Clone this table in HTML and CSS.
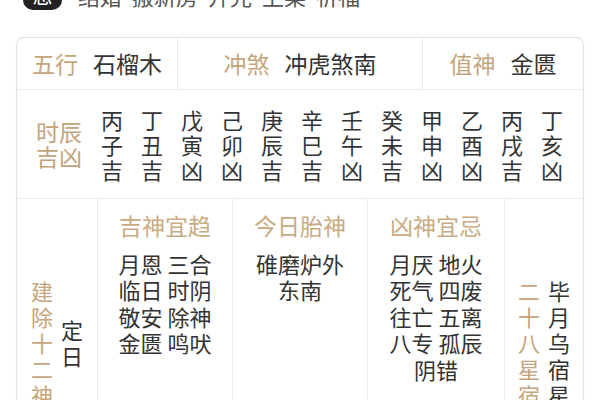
FILE: index.html
```html
<!DOCTYPE html>
<html lang="zh">
<head>
<meta charset="utf-8">
<title>黄历</title>
<link rel="stylesheet" href="styles.css">
</head>
<body>
<div class="top-row">
  <span class="badge">忌</span>
  <span class="top-items">
    <span>结婚</span><span>搬新房</span><span>开光</span><span>上梁</span><span>祈福</span>
  </span>
</div>
<div class="card">
  <div class="row r1">
    <div class="cell"><span class="lbl">五行</span><span class="val">石榴木</span></div>
    <div class="cell"><span class="lbl">冲煞</span><span class="val">冲虎煞南</span></div>
    <div class="cell"><span class="lbl">值神</span><span class="val">金匮</span></div>
  </div>
  <div class="row r2">
    <div class="hour-label">时辰<br>吉凶</div>
    <div class="hours">
      <div class="hour">丙<br>子<br>吉</div>
      <div class="hour">丁<br>丑<br>吉</div>
      <div class="hour">戊<br>寅<br>凶</div>
      <div class="hour">己<br>卯<br>凶</div>
      <div class="hour">庚<br>辰<br>吉</div>
      <div class="hour">辛<br>巳<br>吉</div>
      <div class="hour">壬<br>午<br>凶</div>
      <div class="hour">癸<br>未<br>吉</div>
      <div class="hour">甲<br>申<br>凶</div>
      <div class="hour">乙<br>酉<br>凶</div>
      <div class="hour">丙<br>戌<br>吉</div>
      <div class="hour">丁<br>亥<br>凶</div>
    </div>
  </div>
  <div class="row r3">
    <div class="vcol">
      <div class="vlbl">建除十二神</div>
      <div class="vval">定日</div>
    </div>
    <div class="gods">
      <div class="ghead">吉神宜趋</div>
      <div class="glist">
        <div>月恩 三合</div>
        <div>临日 时阴</div>
        <div>敬安 除神</div>
        <div>金匮 鸣吠</div>
      </div>
    </div>
    <div class="gods">
      <div class="ghead">今日胎神</div>
      <div class="glist">
        <div>碓磨炉外</div>
        <div>东南</div>
      </div>
    </div>
    <div class="gods">
      <div class="ghead">凶神宜忌</div>
      <div class="glist">
        <div>月厌 地火</div>
        <div>死气 四废</div>
        <div>往亡 五离</div>
        <div>八专 孤辰</div>
        <div>阴错</div>
      </div>
    </div>
    <div class="vcol">
      <div class="vlbl">二十八星宿</div>
      <div class="vval">毕月乌宿星</div>
    </div>
  </div>
</div>
</body>
</html>
```

FILE: styles.css
```css
* { box-sizing: border-box; }

html, body {
  margin: 0;
  padding: 0;
  background: #ffffff;
  overflow: hidden;
}

body {
  width: 600px;
  height: 400px;
  font-family: "Noto Sans CJK SC", "Noto Sans", sans-serif;
  color: #333333;
}

.top-row {
  display: flex;
  align-items: flex-end;
  height: 26px;
  margin-top: -18px;
  padding-left: 23px;
}

.badge {
  width: 39px;
  height: 28px;
  border-radius: 10px;
  background: #222222;
  color: #ffffff;
  font-size: 20px;
  line-height: 28px;
  text-align: center;
  margin-bottom: -2px;
}

.top-items {
  display: flex;
  gap: 10px;
  margin-left: 16px;
  font-size: 22px;
  line-height: 26px;
  color: #555555;
}

.card {
  margin: 29px 0 0 16px;
  width: 568px;
  border: 1px solid #e2e2e2;
  border-radius: 8px;
  box-shadow: 0 0 3px rgba(0, 0, 0, 0.04);
  background: #ffffff;
}

.row {
  border-bottom: 1px solid #ebebeb;
}

.r1 {
  display: grid;
  grid-template-columns: 160px 245px 1fr;
}

.r1 .cell {
  display: flex;
  justify-content: center;
  align-items: center;
  padding: 11.5px 0;
  font-size: 23px;
  line-height: 27.6px;
}

.r1 .cell + .cell {
  border-left: 1px solid #ebebeb;
}

.lbl {
  color: #c5a57b;
}

.val {
  margin-left: 15px;
  color: #333333;
}

.r2 {
  display: flex;
  align-items: center;
  padding: 17px 0 16px;
}

.hour-label {
  width: 84px;
  text-align: center;
  color: #c3a37c;
  font-size: 23px;
  line-height: 25px;
}

.hours {
  display: grid;
  grid-template-columns: repeat(12, 22px);
  column-gap: 18px;
}

.hour {
  font-size: 22px;
  line-height: 25px;
  text-align: center;
  color: #333333;
}

.r3 {
  display: grid;
  grid-template-columns: 80px 135px 135px 137px 1fr;
  height: 287px;
  border-bottom: none;
}

.r3 > div + div {
  border-left: 1px solid #ebebeb;
}

.vcol {
  display: flex;
  justify-content: center;
  align-items: center;
  gap: 8px;
  font-size: 22px;
  line-height: 26px;
}

.vlbl, .vval {
  width: 22px;
  text-align: center;
  word-break: break-all;
}

.vlbl {
  color: #c5a57b;
}

.vval {
  color: #333333;
}

.gods {
  padding-top: 13px;
  text-align: center;
}

.ghead {
  font-size: 23px;
  line-height: 27.6px;
  color: #c9ab82;
}

.glist {
  margin-top: 10.5px;
  font-size: 22px;
  line-height: 26.6px;
  color: #333333;
}
```
